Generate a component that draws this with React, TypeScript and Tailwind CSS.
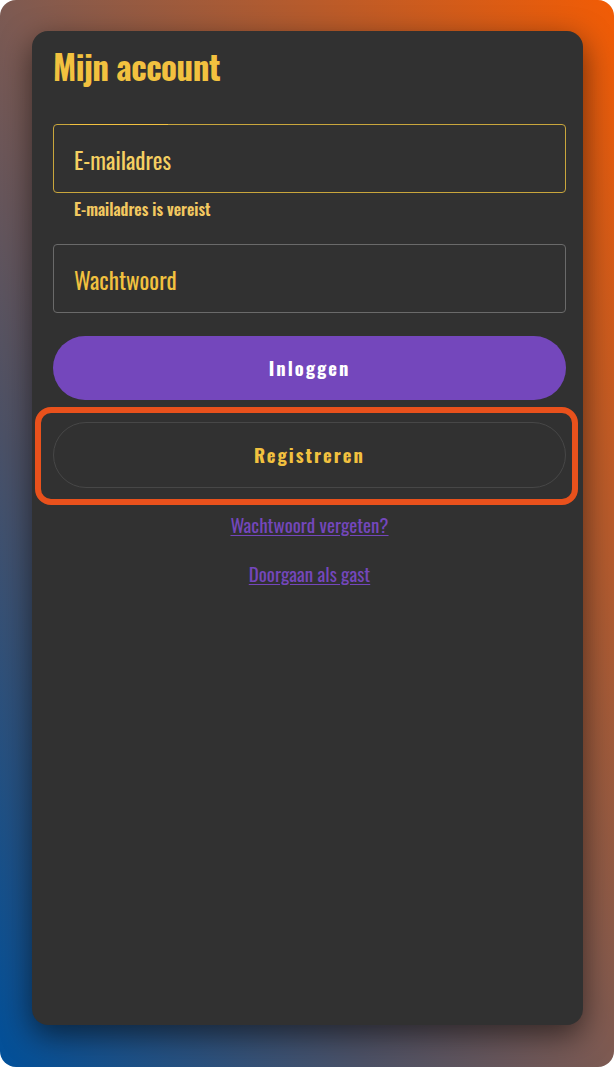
import React from "react";

const font = { fontFamily: '"Oswald", "Liberation Sans Narrow", "DejaVu Sans Condensed", sans-serif' };

const App = () => {
  return (
    <div className="min-h-screen bg-white" style={font}>
      <div className="h-[1067px] w-[614px] rounded-2xl bg-[linear-gradient(to_bottom_left,#f25c05_0%,#7d5a52_50%,#4c5166_70%,#01509a_100%)] pt-[31px] pl-[32px] pr-[31px]">
        <div className="h-[994px] rounded-2xl bg-[#313131] pl-[21px] pr-[17px] pt-[14px] shadow-[0_10px_30px_rgba(0,0,0,0.55)]">
          <h1 className="text-[33px] font-bold leading-[44px] tracking-[-0.5px] text-[#f2c13f]">Mijn account</h1>

          <div className="mt-[35px]">
            <div className="relative flex h-[69px] items-center rounded-[4px] border border-[#c9a63c] px-[20px]">
              <span className="pointer-events-none absolute -top-px left-[16px] h-px w-[98px] bg-[#f2c13f]" />
              <span className="pt-[2px] text-[23px] leading-[30px] text-[#f5d062]">E-mailadres</span>
            </div>
            <p className="mt-[6px] pl-[21px] text-[16px] font-semibold leading-[20px] text-[#f2c860]">E-mailadres is vereist</p>
          </div>

          <div className="mt-[25px] flex h-[69px] items-center rounded-[4px] border border-[#6a6a6a] px-[20px]">
            <span className="pt-[2px] text-[23px] leading-[30px] text-[#f2c13f]">Wachtwoord</span>
          </div>

          <button className="mt-[23px] flex h-[64px] w-full items-center justify-center rounded-full bg-[#7447bc] text-[18.5px] font-bold tracking-[2px] text-white">
            Inloggen
          </button>

          <div className="relative mt-[22px]">
            <button className="flex h-[66px] w-full items-center justify-center rounded-full border border-[#474747] text-[18.5px] font-bold tracking-[2px] text-[#f2c13f]">
              Registreren
            </button>
            <span className="pointer-events-none absolute -left-[18px] -right-[12px] -top-[15px] -bottom-[17px] rounded-[16px] border-[6px] border-[#e9511c]" />
          </div>

          <div className="mt-[24px] flex flex-col items-center gap-[24px]">
            <a href="#" className="text-[19px] leading-[25px] text-[#7447bc] underline underline-offset-2">Wachtwoord vergeten?</a>
            <a href="#" className="text-[19px] leading-[25px] text-[#7447bc] underline underline-offset-2">Doorgaan als gast</a>
          </div>
        </div>
      </div>
    </div>
  );
};

export default App;
